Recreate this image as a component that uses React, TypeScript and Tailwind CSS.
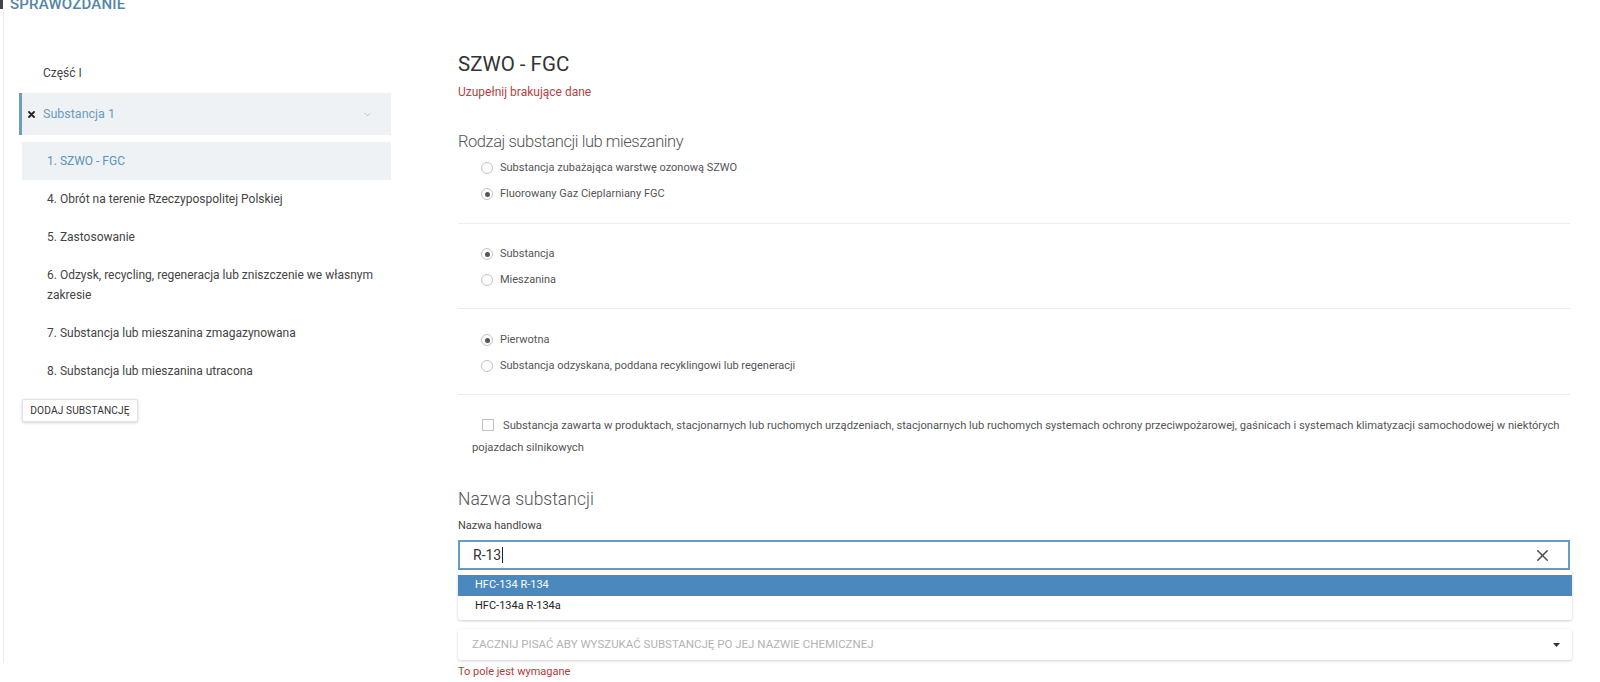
import React from "react";
import { X, ChevronDown } from "lucide-react";

const sideItems = [
  ["4. Obrót na terenie Rzeczypospolitej Polskiej"],
  ["5. Zastosowanie"],
  ["6. Odzysk, recycling, regeneracja lub zniszczenie we własnym", "zakresie"],
  ["7. Substancja lub mieszanina zmagazynowana"],
  ["8. Substancja lub mieszanina utracona"],
];

function Radio({ label, checked }: { label: string; checked?: boolean }) {
  return (
    <div className="flex items-center h-[26px] pl-[23px]">
      <span className="w-[12px] h-[12px] rounded-full border border-[#c2c2c2] flex items-center justify-center bg-white">
        {checked && <span className="w-[5px] h-[5px] rounded-full bg-[#555]" />}
      </span>
      <span className="ml-[7px] text-[11px] text-[#555]">{label}</span>
    </div>
  );
}

function Divider() {
  return <div className="border-t border-[#ececec]" />;
}

export default function App() {
  return (
    <div className="w-[1600px] h-[682px] overflow-hidden bg-white relative font-['Roboto',sans-serif]">
      {/* window edge mark */}
      <div className="absolute left-0 top-0 w-[3px] h-[9px] bg-[#444]" />

      {/* page title, cut at the top */}
      <div className="h-[12px] overflow-hidden pl-[10px]">
        <div className="-mt-[4px] text-[15px] leading-[16px] font-medium tracking-[0.2px] text-[#5585a8]">
          SPRAWOZDANIE
        </div>
      </div>

      <div className="flex ml-[3px] border-l border-[#ececec] h-[651px]">
        {/* sidebar */}
        <div className="w-[387px] pl-[15px] pt-[41px] shrink-0">
          <div className="py-[10px] leading-[20px] pl-[24px] text-[12px] text-[#444]">Część I</div>

          <div className="h-[42px] flex items-center bg-[#eef2f5] border-l-[3px] border-[#6f9dbd] pl-[6px] pr-[18px]">
            <svg width="7" height="7" viewBox="0 0 7 7" className="mr-[8px]">
              <path d="M1 1L6 6M6 1L1 6" stroke="#222" strokeWidth="1.8" strokeLinecap="round" />
            </svg>
            <span className="text-[12.5px] text-[#6a9bbf] flex-1">Substancja 1</span>
            <ChevronDown size={11} strokeWidth={1.5} className="text-[#9db3c4]" />
          </div>

          <div className="mt-[7px] ml-[3px] py-[9px] leading-[20px] pl-[25px] bg-[#eef2f5] text-[12px] text-[#5b93b9]">
            1. SZWO - FGC
          </div>

          {sideItems.map((lines, i) => (
            <div key={i} className="py-[9px] leading-[20px] pl-[28px] text-[12px] text-[#444] whitespace-nowrap">
              {lines.map((l, j) => (
                <div key={j}>{l}</div>
              ))}
            </div>
          ))}

          <button className="mt-[9px] ml-[3px] h-[23px] w-[116px] border border-[#e2e2e2] rounded-[2px] shadow-[0_1px_3px_rgba(0,0,0,0.18)] bg-white text-[10.2px] text-[#333] uppercase tracking-[0.1px]">
            Dodaj substancję
          </button>
        </div>

        {/* main form */}
        <div className="ml-[67px] w-[1114px] pt-[40px]">
          <h1 className="text-[20.5px] leading-[24px] text-[#333]">SZWO - FGC</h1>
          <div className="mt-[8px] text-[12px] leading-[16px] text-[#b7423f]">Uzupełnij brakujące dane</div>

          <h2 className="mt-[31px] text-[16.5px] leading-[22px] font-light tracking-[-0.45px] text-[#555]">
            Rodzaj substancji lub mieszaniny
          </h2>
          <div className="mt-[2px] mb-[16px] w-[1112px]">
            <Radio label="Substancja zubażająca warstwę ozonową SZWO" />
            <Radio label="Fluorowany Gaz Cieplarniany FGC" checked />
          </div>
          <div className="w-[1112px]">
            <Divider />
          </div>

          <div className="pt-[17px] pb-[15px] w-[1112px]">
            <Radio label="Substancja" checked />
            <Radio label="Mieszanina" />
          </div>
          <div className="w-[1112px]">
            <Divider />
          </div>

          <div className="pt-[18px] pb-[15px] w-[1112px]">
            <Radio label="Pierwotna" checked />
            <Radio label="Substancja odzyskana, poddana recyklingowi lub regeneracji" />
          </div>
          <div className="w-[1112px]">
            <Divider />
          </div>

          <div className="pt-[20px] pl-[14px] w-[1112px] text-[11.2px] leading-[22px] text-[#555]">
            <span className="inline-block align-[-2px] w-[12px] h-[12px] border border-[#c2c2c2] bg-white ml-[10px] mr-[9px]" />
            Substancja zawarta w produktach, stacjonarnych lub ruchomych urządzeniach, stacjonarnych lub ruchomych
            systemach ochrony przeciwpożarowej, gaśnicach i systemach klimatyzacji samochodowej w niektórych pojazdach
            silnikowych
          </div>

          <h2 className="mt-[29px] text-[17.5px] leading-[22px] font-light text-[#555]">Nazwa substancji</h2>
          <div className="mt-[9px] text-[11px] leading-[14px] text-[#444]">Nazwa handlowa</div>

          <div className="mt-[7px] w-[1112px] h-[30px] border-2 border-[#6a9cc1] flex items-center pl-[13px] pr-[16px] bg-white">
            <span className="text-[14px] text-[#333]">R-13</span>
            <span className="ml-[1px] w-px h-[16px] bg-[#222]" />
            <span className="flex-1" />
            <X size={19} strokeWidth={1.8} className="text-[#4a4a4a]" />
          </div>

          <div className="w-[1114px] pt-[5px] pb-[3px] bg-white rounded-b-[3px] shadow-[0_1px_3px_rgba(0,0,0,0.2)]">
            <div className="h-[21px] flex items-center pl-[17px] bg-[#4a88bd] text-[11px] text-white">HFC-134 R-134</div>
            <div className="h-[21px] flex items-center pl-[17px] text-[11px] text-[#222]">HFC-134a R-134a</div>
          </div>

          <div className="mt-[9px] w-[1114px] h-[31px] flex items-center pl-[14px] pr-[12px] rounded-[3px] bg-white shadow-[0_1px_3px_rgba(0,0,0,0.18)]">
            <span className="flex-1 text-[11.5px] text-[#b3b3b3] uppercase">
              Zacznij pisać aby wyszukać substancję po jej nazwie chemicznej
            </span>
            <svg width="7" height="4" viewBox="0 0 7 4">
              <path d="M0 0H7L3.5 4Z" fill="#333" />
            </svg>
          </div>

          <div className="mt-[4px] text-[11px] leading-[16px] text-[#b3393a]">To pole jest wymagane</div>
        </div>
      </div>
    </div>
  );
}
